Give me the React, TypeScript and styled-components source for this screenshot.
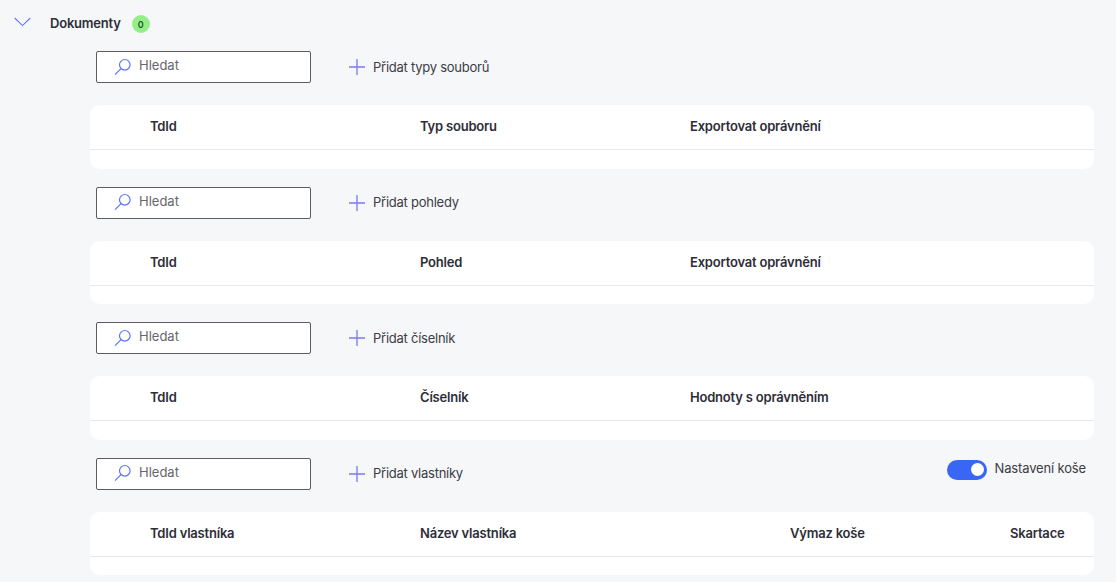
import React from "react";
import styled, { createGlobalStyle } from "styled-components";

const Global = createGlobalStyle`
  html, body { margin: 0; padding: 0; background: #f6f7f9; }
  body { font-family: Inter, "Noto Sans", sans-serif; color: #2b2b33; }
`;

const Page = styled.div`
  width: 1116px;
  height: 582px;
  overflow: hidden;
  box-sizing: border-box;
  padding-top: 13px;
`;

const Heading = styled.div`
  display: flex;
  align-items: center;
  height: 22px;
  padding-left: 14px;
`;

const Chevron = styled.svg`
  width: 17px;
  height: 10px;
  margin-top: -4px;
`;

const Title = styled.span`
  margin-left: 19px;
  font-size: 13px;
  font-weight: 600;
  line-height: 20px;
  margin-top: -2px;
  letter-spacing: -0.2px;
  color: #2e2e38;
`;

const Badge = styled.span`
  margin-left: 11px;
  width: 18px;
  height: 18px;
  border-radius: 50%;
  background: #96ee8b;
  color: #1e5c18;
  font-size: 9px;
  font-weight: 600;
  display: flex;
  align-items: center;
  justify-content: center;
`;

const Sections = styled.div`
  margin-top: 16px;
  padding-left: 90px;
  width: 1004px;
  display: flex;
  flex-direction: column;
  gap: 18px;
`;

const Section = styled.section`
  display: flex;
  flex-direction: column;
  gap: 22px;
`;

const Toolbar = styled.div`
  display: flex;
  align-items: center;
  height: 32px;
  padding-left: 6px;
`;

const Search = styled.div`
  width: 215px;
  height: 32px;
  box-sizing: border-box;
  background: #fff;
  border: 1px solid #5c5c60;
  border-radius: 2px;
  display: flex;
  align-items: center;
  padding: 0 0 4px 17px;
`;

const SearchIcon = styled.svg`
  width: 18px;
  height: 18px;
  margin-top: 3px;
`;

const SearchText = styled.span`
  margin-left: 7px;
  font-size: 13px;
  color: #66666c;
`;

const AddButton = styled.div`
  margin-left: 37px;
  display: flex;
  align-items: center;
  font-size: 13px;
  letter-spacing: -0.25px;
  line-height: 16px;
  padding-bottom: 0.5px;
  color: #3c3c44;
`;

const PlusIcon = styled.svg`
  width: 18px;
  height: 18px;
  margin-right: 7px;
  margin-top: 0.5px;
`;

const Toggle = styled.div`
  margin-left: auto;
  display: flex;
  align-items: center;
  gap: 8px;
  margin-top: -8px;
  font-size: 13px;
  letter-spacing: -0.15px;
  color: #3c3c44;
  padding-right: 8px;
`;

const ToggleLabel = styled.span`
  margin-top: -3px;
`;

const Track = styled.div`
  width: 40px;
  height: 20px;
  border-radius: 10px;
  background: #3a66f5;
  display: flex;
  align-items: center;
  justify-content: flex-end;
  padding-right: 3px;
  box-sizing: border-box;
`;

const Knob = styled.div`
  width: 13px;
  height: 13px;
  border-radius: 50%;
  background: #fff;
`;

const Card = styled.div`
  background: #fff;
  border-radius: 10px;
  height: 63.5px;
`;

const HeaderRow = styled.div`
  height: 45px;
  box-sizing: border-box;
  border-bottom: 1px solid #e8e9eb;
  padding: 0 0 1.7px 60px;
  display: flex;
  align-items: center;
`;

const Col = styled.div<{ $w: number }>`
  width: ${(p) => p.$w}px;
  flex: none;
  font-size: 13px;
  font-weight: 600;
  letter-spacing: -0.2px;
  color: #2e2e38;
`;

const Magnifier = () => (
  <SearchIcon viewBox="0 0 18 18" fill="none">
    <circle cx="10.8" cy="6.8" r="5.3" stroke="#5b74ff" strokeWidth="1.2" />
    <path d="M7 10.6 1 16.6" stroke="#5b74ff" strokeWidth="1.2" />
  </SearchIcon>
);

const Plus = () => (
  <PlusIcon viewBox="0 0 18 18" fill="none">
    <path d="M9 1v16M1 9h16" stroke="#7d78f0" strokeWidth="1.3" />
  </PlusIcon>
);

type Column = { label: string; w: number };

const sections: { add: string; cols: Column[]; toggle?: boolean }[] = [
  {
    add: "Přidat typy souborů",
    cols: [
      { label: "TdId", w: 270 },
      { label: "Typ souboru", w: 270 },
      { label: "Exportovat oprávnění", w: 270 },
    ],
  },
  {
    add: "Přidat pohledy",
    cols: [
      { label: "TdId", w: 270 },
      { label: "Pohled", w: 270 },
      { label: "Exportovat oprávnění", w: 270 },
    ],
  },
  {
    add: "Přidat číselník",
    cols: [
      { label: "TdId", w: 270 },
      { label: "Číselník", w: 270 },
      { label: "Hodnoty s oprávněním", w: 270 },
    ],
  },
  {
    add: "Přidat vlastníky",
    toggle: true,
    cols: [
      { label: "TdId vlastníka", w: 270 },
      { label: "Název vlastníka", w: 370 },
      { label: "Výmaz koše", w: 220 },
      { label: "Skartace", w: 80 },
    ],
  },
];

export default function App() {
  return (
    <Page>
      <Global />
      <Heading>
        <Chevron viewBox="0 0 17 10" fill="none">
          <path d="M.7 1 8.5 8.6 16.3 1" stroke="#6f74f2" strokeWidth="1.1" />
        </Chevron>
        <Title>Dokumenty</Title>
        <Badge>0</Badge>
      </Heading>
      <Sections>
        {sections.map((s) => (
          <Section key={s.add}>
            <Toolbar>
              <Search>
                <Magnifier />
                <SearchText>Hledat</SearchText>
              </Search>
              <AddButton>
                <Plus />
                {s.add}
              </AddButton>
              {s.toggle && (
                <Toggle>
                  <Track>
                    <Knob />
                  </Track>
                  <ToggleLabel>Nastavení koše</ToggleLabel>
                </Toggle>
              )}
            </Toolbar>
            <Card>
              <HeaderRow>
                {s.cols.map((c) => (
                  <Col key={c.label} $w={c.w}>
                    {c.label}
                  </Col>
                ))}
              </HeaderRow>
            </Card>
          </Section>
        ))}
      </Sections>
    </Page>
  );
}
